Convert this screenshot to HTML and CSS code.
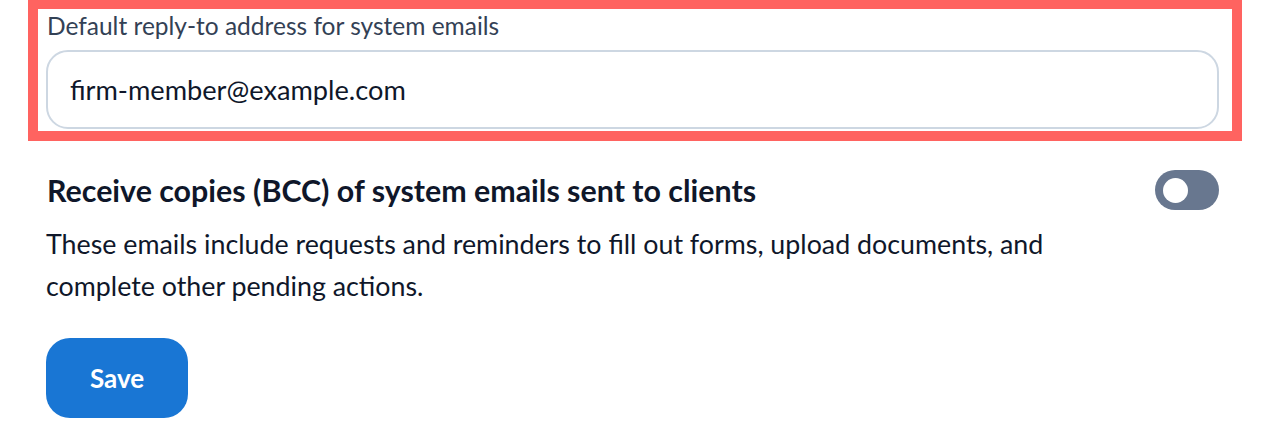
FILE: index.html
```html
<!DOCTYPE html>
<html lang="en">
<head>
<meta charset="utf-8">
<title>Email settings</title>
<link rel="stylesheet" href="styles.css">
</head>
<body>
<main class="page">
  <div class="field-group">
    <label class="field-label" for="reply-to">Default reply-to address for system emails</label>
    <div class="input-box" id="reply-to"><span class="input-value">firm-member@example.com</span></div>
  </div>
  <section class="setting">
    <div class="setting-head">
      <h2 class="setting-title">Receive copies (BCC) of system emails sent to clients</h2>
      <span class="toggle" role="switch" aria-checked="false"><span class="knob"></span></span>
    </div>
    <p class="setting-desc">These emails include requests and reminders to fill out forms, upload documents, and<br>complete other pending actions.</p>
  </section>
  <button class="save-btn" type="button">Save</button>
</main>
</body>
</html>
```
FILE: styles.css
```css
* { box-sizing: border-box; }
html, body { margin: 0; padding: 0; background: #ffffff; }
body {
  font-family: "Lato", "Source Sans Pro", "Noto Sans", sans-serif;
  color: #0f172a;
}
.page {
  padding: 0 49px 0 46px;
}
.field-group {
  margin: -1px -23px 0 -18px;
  border: 10px solid #ff6360;
  padding: 0 13px 2px 8px;
}
.field-label {
  display: block;
  font-size: 24.5px;
  line-height: 34px;
  color: #334155;
  padding-left: 1px;
}
.input-box {
  margin-top: 7px;
  height: 79px;
  border: 2px solid #cdd7e2;
  border-radius: 22px;
  display: flex;
  align-items: center;
  padding: 0 22px;
}
.input-value {
  font-size: 27.2px;
  color: #0f172a;
}
.setting { margin-top: 29px; }
.setting-head {
  display: flex;
  align-items: center;
  justify-content: space-between;
  height: 40px;
}
.setting-title {
  margin: 0;
  font-size: 30.4px;
  font-weight: 700;
  color: #0f172a;
  padding-left: 1px;
}
.toggle {
  width: 64px;
  height: 40px;
  border-radius: 20px;
  background: #68778f;
  display: flex;
  align-items: center;
  padding-left: 8px;
}
.knob {
  width: 25px;
  height: 25px;
  border-radius: 50%;
  background: #ffffff;
}
.setting-desc {
  margin: 13px 0 0 0;
  font-size: 26.8px;
  line-height: 42px;
  color: #0f172a;
}
.save-btn {
  margin-top: 31px;
  width: 142px;
  height: 80px;
  border: none;
  border-radius: 24px;
  background: #1976d4;
  color: #ffffff;
  font-family: inherit;
  font-size: 26px;
  font-weight: 700;
}
```
